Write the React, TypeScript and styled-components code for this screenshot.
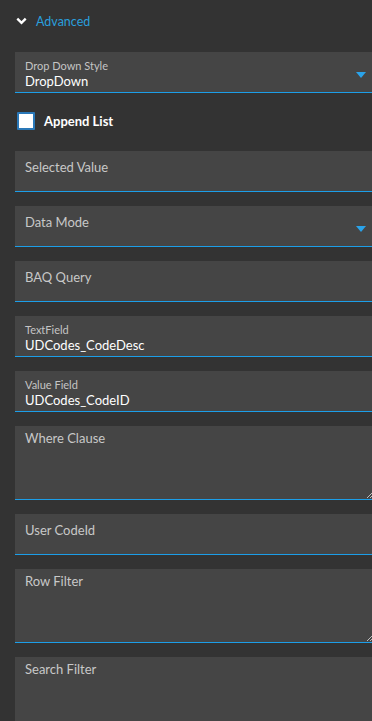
import React from 'react'
import styled, { createGlobalStyle } from 'styled-components'

const GlobalStyle = createGlobalStyle`
    html, body {
        margin: 0;
        padding: 0;
        background: #333333;
    }
    body {
        font-family: Lato, "Liberation Sans", sans-serif;
        overflow: hidden;
    }
`

const Panel = styled.div`
    width: 372px;
    height: 721px;
    background: #333333;
    padding-left: 15px;
    box-sizing: border-box;
    overflow: hidden;
`

const Header = styled.div`
    height: 42px;
    display: flex;
    align-items: center;
    gap: 9px;
    padding-left: 1px;
    color: #2a9fdc;
    font-size: 12.5px;
    .chev{
        width: 11px;
        height: 8px;
        margin-top: -1px;
    }
`

const Stack = styled.div`
    display: flex;
    flex-direction: column;
    padding-top: 10px;
`

const FieldBox = styled.div<{ tall?: boolean; bare?: boolean }>`
    position: relative;
    flex-shrink: 0;
    height: ${props => props.tall ? '74px' : '41px'};
    background: #454545;
    border-bottom: ${props => props.bare ? 'none' : '1px solid #1c9ee8'};
    margin-bottom: 14px;
    padding: ${props => props.tall ? '3px' : '7px'} 10px 0;
    box-sizing: border-box;
    .small_label{
        font-size: 11px;
        color: #c4c4c4;
        line-height: 13px;
    }
    .value{
        font-size: 13px;
        color: #ffffff;
        line-height: 18px;
    }
    .label{
        font-size: 13px;
        color: #c8c8c8;
        line-height: 16px;
        padding-top: 1px;
    }
`

const Arrow = styled.div`
    position: absolute;
    right: 6px;
    top: 20px;
    width: 0;
    height: 0;
    border-left: 5.5px solid transparent;
    border-right: 5.5px solid transparent;
    border-top: 6px solid #2aa3ea;
`

const Grip = styled.svg`
    position: absolute;
    right: 0;
    bottom: 1px;
`

const CheckRow = styled.div`
    display: flex;
    align-items: center;
    gap: 9px;
    height: 18px;
    padding-left: 2px;
    margin: 5px 0 21px;
    color: #ffffff;
    font-size: 13px;
    font-weight: 700;
    .box{
        width: 14px;
        height: 14px;
        background: #ffffff;
        border: 2px solid #2a78b8;
        border-radius: 1px;
    }
`

type FieldProps = {
    label: string
    value?: string
    arrow?: boolean
    tall?: boolean
    bare?: boolean
}

const Field = ({ label, value, arrow, tall, bare }: FieldProps) => {
    return (
        <FieldBox tall={tall} bare={bare}>
            {value !== undefined ? (
                <>
                    <div className='small_label'>{label}</div>
                    <div className='value'>{value}</div>
                </>
            ) : (
                <div className='label'>{label}</div>
            )}
            {arrow && <Arrow />}
            {tall && !bare && (
                <Grip width="6" height="6" viewBox="0 0 6 6">
                    <path d="M1 6 L6 1 M4 6 L6 4" stroke="#bdbdbd" strokeWidth="1" />
                </Grip>
            )}
        </FieldBox>
    )
}

const App = () => {
    return (
        <Panel>
            <GlobalStyle />
            <Header>
                <svg className='chev' viewBox="0 0 11 8">
                    <path d="M1.3 1.6 L5.5 5.8 L9.7 1.6" fill="none" stroke="#ffffff" strokeWidth="2.4" />
                </svg>
                <span>Advanced</span>
            </Header>
            <Stack>
                <Field label="Drop Down Style" value="DropDown" arrow />
                <CheckRow>
                    <div className='box' />
                    <span>Append List</span>
                </CheckRow>
                <Field label="Selected Value" />
                <Field label="Data Mode" arrow />
                <Field label="BAQ Query" />
                <Field label="TextField" value="UDCodes_CodeDesc" />
                <Field label="Value Field" value="UDCodes_CodeID" />
                <Field label="Where Clause" tall />
                <Field label="User CodeId" />
                <Field label="Row Filter" tall />
                <Field label="Search Filter" tall bare />
            </Stack>
        </Panel>
    )
}

export default App
